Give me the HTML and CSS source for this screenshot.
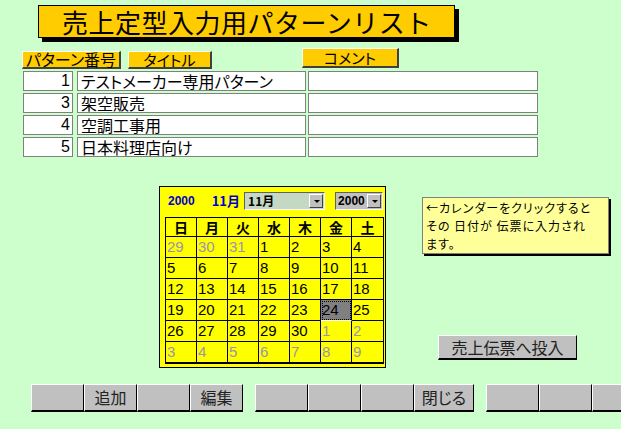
FILE: index.html
```html
<!doctype html>
<html>
<head>
  <meta charset="utf-8">
  <title>売上定型入力用パターンリスト</title>
  <link rel="stylesheet" href="styles.css">
</head>
<body>

	<div class="title">売上定型入力用パターンリスト</div>

	<div class="heads">
		<div class="head h-no">パターン番号</div>
		<div class="head h-title">タイトル</div>
		<div class="head h-comment">コメント</div>
	</div>

	<div class="rows">
		<div class="row">
			<div class="cell no">1</div>
			<div class="cell name">テストメーカー専用パターン</div>
			<div class="cell comment"></div>
		</div>
		<div class="row">
			<div class="cell no">3</div>
			<div class="cell name">架空販売</div>
			<div class="cell comment"></div>
		</div>
		<div class="row">
			<div class="cell no">4</div>
			<div class="cell name">空調工事用</div>
			<div class="cell comment"></div>
		</div>
		<div class="row">
			<div class="cell no">5</div>
			<div class="cell name">日本料理店向け</div>
			<div class="cell comment"></div>
		</div>
	</div>

	<div class="middle">
		<div class="calendar">
			<div class="cal-head">
				<span class="cal-year">2000</span>
				<span class="cal-month">11月</span>
				<div class="combo combo-month"><span>11月</span><i class="drop"></i></div>
				<div class="combo combo-year"><span>2000</span><i class="drop"></i></div>
			</div>
			<div class="cal-grid">
				<div class="dow">日</div><div class="dow">月</div><div class="dow">火</div><div class="dow">水</div><div class="dow">木</div><div class="dow">金</div><div class="dow">土</div>

				<div class="day other">29</div><div class="day other">30</div><div class="day other">31</div><div class="day">1</div><div class="day">2</div><div class="day">3</div><div class="day">4</div>
				<div class="day">5</div><div class="day">6</div><div class="day">7</div><div class="day">8</div><div class="day">9</div><div class="day">10</div><div class="day">11</div>
				<div class="day">12</div><div class="day">13</div><div class="day">14</div><div class="day">15</div><div class="day">16</div><div class="day">17</div><div class="day">18</div>
				<div class="day">19</div><div class="day">20</div><div class="day">21</div><div class="day">22</div><div class="day">23</div><div class="day today">24</div><div class="day">25</div>
				<div class="day">26</div><div class="day">27</div><div class="day">28</div><div class="day">29</div><div class="day">30</div><div class="day other">1</div><div class="day other">2</div>
				<div class="day other">3</div><div class="day other">4</div><div class="day other">5</div><div class="day other">6</div><div class="day other">7</div><div class="day other">8</div><div class="day other">9</div>
			</div>
		</div>

		<div class="side">
			<div class="note">
				<div>←カレンダーをクリックすると</div>
				<div>その 日付が 伝票に入力され</div>
				<div>ます。</div>
			</div>
			<div class="btn post">売上伝票へ投入</div>
		</div>
	</div>

	<div class="toolbar">
		<div class="group">
			<div class="btn tb"></div>
			<div class="btn tb">追加</div>
			<div class="btn tb"></div>
			<div class="btn tb">編集</div>
		</div>
		<div class="group">
			<div class="btn tb"></div>
			<div class="btn tb"></div>
			<div class="btn tb"></div>
			<div class="btn tb wide">閉じる</div>
		</div>
		<div class="group">
			<div class="btn tb"></div>
			<div class="btn tb"></div>
			<div class="btn tb"></div>
		</div>
	</div>

</body>
</html>
```

FILE: styles.css
```css
	html, body {height: 100%}
	body {
		margin: 0;
		padding: 0;
		background: #ccffcc;
		font-family: "Noto Sans CJK JP", "Liberation Sans", sans-serif;
		font-feature-settings: "palt";
		color: #000;
		overflow: hidden;
	}

	.title {
		margin: 5px 0 0 38px;
		width: 417px;
		height: 33px;
		box-sizing: border-box;
		border: 1px solid #000;
		box-shadow: 4px 4px 0 #000;
		background: #ffcc00;
		padding-left: 23px;
		font-size: 26px;
		line-height: 31px;
		letter-spacing: 0.5px;
		font-feature-settings: normal;
	}

	/* column headers */
	.heads {
		display: flex;
		align-items: flex-start;
		margin-top: 10px;
		height: 21px;
	}
	.head {
		box-sizing: border-box;
		background: #ffcc00;
		border-top: 1px solid #fff;
		border-left: 1px solid #fff;
		border-right: 2px solid #404040;
		border-bottom: 2px solid #404040;
		text-align: center;
		line-height: 15px;
		white-space: nowrap;
	}
	.h-no {margin: 3px 0 0 22px; width: 99px; height: 18px; font-size: 16px;}
	.h-title {margin: 3px 0 0 7px; width: 84px; height: 18px; font-size: 15px;}
	.h-comment {margin: 0 0 0 90px; width: 97px; height: 20px; font-size: 15px; line-height: 17px;}

	/* list rows */
	.rows {
		margin-top: 2px;
		display: flex;
		flex-direction: column;
		gap: 2px;
	}
	.row {
		display: flex;
		height: 20px;
	}
	.cell {
		box-sizing: border-box;
		background: #fff;
		border: 1px solid #808080;
		font-size: 16px;
		line-height: 18px;
		white-space: nowrap;
	}
	.no {margin-left: 23px; width: 50px; text-align: right; padding-right: 2px; font-family: "Liberation Sans", sans-serif;}
	.name {margin-left: 4px; width: 229px; padding-left: 3px;}
	.comment {margin-left: 2px; width: 230px;}

	/* calendar + side */
	.middle {
		display: flex;
		align-items: flex-start;
		margin-top: 29px;
	}
	.calendar {
		margin-left: 159px;
		width: 227px;
		height: 182px;
		box-sizing: border-box;
		border: 1px solid #000;
		background: #ffff00;
		padding: 4px 0 0 5px;
	}
	.cal-head {
		display: flex;
		align-items: center;
		height: 19px;
	}
	.cal-year {
		margin-left: 3px;
		color: #0000cc;
		font: bold 12px "Liberation Sans", sans-serif;
	}
	.cal-month {
		margin-left: 17px;
		color: #0000cc;
		font-weight: bold;
		font-size: 13px;
	}
	.combo {
		box-sizing: border-box;
		height: 18px;
		display: flex;
		align-items: center;
		justify-content: space-between;
		border-top: 1px solid #606060;
		border-left: 1px solid #606060;
		border-right: 1px solid #fff;
		border-bottom: 1px solid #fff;
		font-weight: bold;
		font-size: 12px;
		padding-left: 3px;
	}
	.combo-month {margin-left: 4px; width: 81px; background: #c4d8c4;}
	.combo-year {margin-left: 10px; width: 48px; background: #c0c0c0; padding-left: 2px;}
	.combo-year span {font-family: "Liberation Sans", sans-serif;}
	.drop {
		display: block;
		width: 14px;
		height: 14px;
		box-sizing: border-box;
		margin-right: 1px;
		background: #c0c0c0;
		border-top: 1px solid #fff;
		border-left: 1px solid #fff;
		border-right: 1px solid #404040;
		border-bottom: 1px solid #404040;
		position: relative;
	}
	.drop::after {
		content: "";
		position: absolute;
		left: 4px;
		top: 5px;
		border-left: 3px solid transparent;
		border-right: 3px solid transparent;
		border-top: 3px solid #000;
	}

	.cal-grid {
		margin-top: 7px;
		display: grid;
		grid-template-columns: repeat(7, 31px);
		grid-template-rows: 19px repeat(6, 21px);
		width: max-content;
		border: 1px solid #000;
	}
	.cal-grid > div {
		box-sizing: border-box;
		border-right: 1px solid #000030;
		border-bottom: 1px solid #000030;
	}
	.cal-grid > div:nth-child(7n) {border-right: none;}
	.dow {
		text-align: center;
		font-weight: bold;
		font-size: 14px;
		line-height: 18px;
	}
	.day {
		font: 15px/20px "Liberation Sans", sans-serif;
		padding-left: 1px;
	}
	.day.other {color: #9a94b4;}
	.day.today {
		background: #808080;
		outline: 1px dotted #000;
		outline-offset: -2px;
		border-bottom-color: #fff;
	}

	.side {
		margin: 11px 0 0 36px;
	}
	.note {
		width: 187px;
		height: 57px;
		box-sizing: border-box;
		background: #ffff99;
		border: 1px solid #808080;
		box-shadow: 2px 2px 0 #000;
		padding: 1px 0 0 3px;
		font-size: 12px;
		line-height: 18px;
		letter-spacing: 1px;
		white-space: nowrap;
	}

	.btn {
		box-sizing: border-box;
		background: #c0c0c0;
		border-top: 1px solid #fff;
		border-left: 1px solid #fff;
		border-right: 1px solid #000;
		border-bottom: 2px solid #000;
		text-align: center;
		font-size: 16px;
		color: #222;
	}
	.post {
		margin: 81px 0 0 16px;
		width: 139px;
		height: 25px;
		line-height: 22px;
	}

	/* bottom toolbar */
	.toolbar {
		display: flex;
		margin: 16px 0 0 31px;
		gap: 12px;
	}
	.group {
		display: flex;
		flex-shrink: 0;
	}
	.tb {
		width: 53px;
		height: 28px;
		line-height: 25px;
	}
	.tb.wide {width: 60px;}
```
